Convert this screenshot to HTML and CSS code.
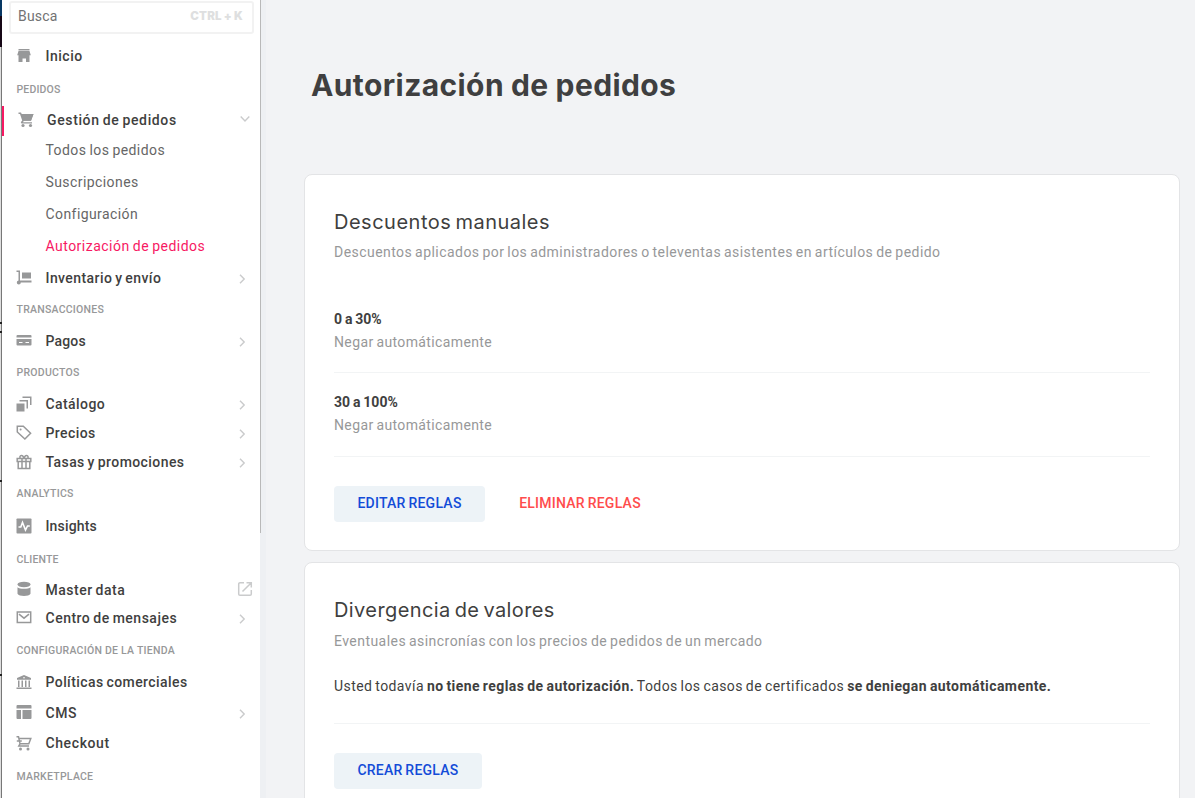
FILE: index.html
```html
<!DOCTYPE html>
<html lang="es">
<head>
<meta charset="utf-8">
<title>Autorización de pedidos</title>
<link rel="stylesheet" href="styles.css">
</head>
<body>
<div class="app">
  <div class="edge"><i class="edge-blue"></i><i class="edge-dark"></i><i class="edge-mark mark-a"></i><i class="edge-mark mark-b"></i><i class="edge-mark mark-c"></i><i class="edge-mark mark-d"></i></div>
  <nav class="sidebar">
    <div class="search"><span>Busca</span><kbd>CTRL + K</kbd></div>
    <a class="item h32"><svg viewBox="0 0 16 16"><path d="M2.500 1h11v1.500h-11zM2.500 3h11l1.300 4.200H1.200zM2.500 7h11v7H10v-3.500H6.500V14h-4z"/></svg><span>Inicio</span></a>
    <h4 class="h34">PEDIDOS</h4>
    <a class="item h28 open"><svg viewBox="0 0 16 16"><path d="M.5.500H3l.7 1.500H15.500L13 8.800H5.800L5 10.200h9v1.300H3.500l-.7-1.200L4.200 8.500 2 2H.5z"/><path d="M3.700 2h11.800L13 8.800H5z"/><circle cx="5" cy="13.500" r="1.600"/><circle cx="12.500" cy="13.500" r="1.600"/></svg><span>Gestión de pedidos</span><svg class="arrow down" viewBox="0 0 10 10"><path d="M.7 2.500 5 7l4.300-4.500"/></svg></a>
    <a class="sub"><span>Todos los pedidos</span></a>
    <a class="sub"><span>Suscripciones</span></a>
    <a class="sub"><span>Configuración</span></a>
    <a class="sub active"><span>Autorización de pedidos</span></a>
    <a class="item h32 medium"><svg viewBox="0 0 16 16"><path d="M.5.500H4V10.500h11.500v2H4.800a2 2 0 1 1-2.300-2V2h-2zM6 2.500h9v6H6z"/></svg><span>Inventario y envío</span><svg class="arrow" viewBox="0 0 10 10"><path d="M3 .7 7.200 5 3 9.300"/></svg></a>
    <h4 class="h31 wide">TRANSACCIONES</h4>
    <a class="item h32 tight"><svg viewBox="0 0 16 16"><path d="M1.500 2h13a1 1 0 0 1 1 1v1.500H.5V3a1 1 0 0 1 1-1zM.5 6h15v5.500a1 1 0 0 1-1 1h-13a1 1 0 0 1-1-1zM3 9v1h3.500V9zm6.500 0v1H13V9z" fill-rule="evenodd"/></svg><span>Pagos</span><svg class="arrow" viewBox="0 0 10 10"><path d="M3 .7 7.200 5 3 9.300"/></svg></a>
    <h4 class="h30 tail wide">PRODUCTOS</h4>
    <a class="item h29 medium"><svg class="raised" viewBox="0 0 16 16"><path d="M.5 7.500h8v8h-8zM3.500 4h8.500v8.500h-1.500v-7h-7zM6.500.5h9V9H14V2H6.500z"/></svg><span>Catálogo</span><svg class="arrow" viewBox="0 0 10 10"><path d="M3 .7 7.200 5 3 9.300"/></svg></a>
    <a class="item h29 medium"><svg class="raised" viewBox="0 0 16 16"><path class="line" d="M1.300 1.300h6l7.300 7-5.700 5.700-7.600-7z"/><circle cx="4.600" cy="4.600" r="1"/></svg><span>Precios</span><svg class="arrow" viewBox="0 0 10 10"><path d="M3 .7 7.200 5 3 9.300"/></svg></a>
    <a class="item h29 medium"><svg class="raised" viewBox="0 0 16 16"><path class="line" d="M1.200 4.500h13.600v3H1.200zM2.200 7.500h11.600v7H2.200zM6 4.500v10M10 4.500v10M6 4.500H4.500A1.700 1.700 0 1 1 6.800 2L8 4l1.200-2a1.700 1.700 0 1 1 2.300 2.500H10"/></svg><span>Tasas y promociones</span><svg class="arrow" viewBox="0 0 10 10"><path d="M3 .7 7.200 5 3 9.300"/></svg></a>
    <h4 class="h33 wide">ANALYTICS</h4>
    <a class="item h33 tight"><svg viewBox="0 0 16 16"><rect x=".5" y=".5" width="15" height="15" rx=".8"/><path class="white" d="M2.500 9h2.300l1.700-4.500L9.500 12l2-4h2.300"/></svg><span>Insights</span></a>
    <h4 class="h33">CLIENTE</h4>
    <a class="item h285"><svg class="raised" viewBox="0 0 16 16"><ellipse cx="8" cy="3.500" rx="6.500" ry="2.700"/><path d="M1.500 6.200c2 2 11 2 13 0v6.500c-1.500 3-11.500 3-13 0z"/></svg><span>Master data</span><svg class="external" viewBox="0 0 16 16"><path d="M7 1.700H3A1.300 1.300 0 0 0 1.700 3v10A1.300 1.300 0 0 0 3 14.300h10a1.300 1.300 0 0 0 1.300-1.300V9M9.500 1.700h4.800v4.800M14.300 1.700 5.500 10.500"/></svg></a>
    <a class="item h28"><svg viewBox="0 0 16 16"><path class="line" d="M1.300 2h13.400v10.500H1.300zM3 4.200l5 4 5-4"/></svg><span>Centro de mensajes</span><svg class="arrow" viewBox="0 0 10 10"><path d="M3 .7 7.200 5 3 9.300"/></svg></a>
    <h4 class="h36 wide">CONFIGURACIÓN DE LA TIENDA</h4>
    <a class="item h28 medium"><svg viewBox="0 0 16 16"><path d="M8 1l7 3v1.800H1V4zM2 6.500h1.500V13H2zM5.500 6.500H7V13H5.500zM9 6.500h1.500V13H9zM12.500 6.500H14V13h-1.500zM.5 13.500h15V15H.5z"/><circle class="dot" cx="8" cy="3.700" r=".8"/></svg><span>Políticas comerciales</span></a>
    <a class="item h33"><svg class="raised" viewBox="0 0 16 16"><path d="M1.500 1h13a1 1 0 0 1 1 1v2.500H.5V2a1 1 0 0 1 1-1zM.5 6H5v9H1.500a1 1 0 0 1-1-1zM6.500 6h9v8a1 1 0 0 1-1 1h-8z"/></svg><span>CMS</span><svg class="arrow" viewBox="0 0 10 10"><path d="M3 .7 7.200 5 3 9.300"/></svg></a>
    <a class="item h28 loose"><svg viewBox="0 0 16 16"><path class="line" d="M.5 1.700h2L4 8.800 2.800 11H13M3 3.500h11.800l-2 5.300H4M.8 6h5"/><circle cx="4.500" cy="14" r="1.500"/><circle cx="12" cy="14" r="1.500"/></svg><span>Checkout</span></a>
    <h4 class="h38 wide">MARKETPLACE</h4>
    <div class="scrollbar"></div>
  </nav>
  <main>
    <h1>Autorización de pedidos</h1>
    <section class="card first">
      <h2>Descuentos manuales</h2>
      <p class="lead">Descuentos aplicados por los administradores o televentas asistentes en artículos de pedido</p>
      <div class="rule"><b>0 a 30%</b><p>Negar automáticamente</p></div>
      <div class="rule last"><b>30 a 100%</b><p>Negar automáticamente</p></div>
      <div class="actions"><button class="edit">EDITAR REGLAS</button><button class="danger">ELIMINAR REGLAS</button></div>
    </section>
    <section class="card second">
      <h2>Divergencia de valores</h2>
      <p class="lead">Eventuales asincronías con los precios de pedidos de un mercado</p>
      <p class="notice">Usted todavía <b>no tiene reglas de autorización.</b> Todos los casos de certificados <b>se deniegan automáticamente.</b></p>
      <div class="actions"><button class="create">CREAR REGLAS</button></div>
    </section>
  </main>
</div>
</body>
</html>
```
FILE: styles.css
```css
* { box-sizing: border-box; }
body { margin: 0; font-family: Roboto, sans-serif; background: #f2f3f5; color: #3f3f40; }
h1, h2, h4, p { margin: 0; }
.app { display: flex; height: 798px; overflow: hidden; }

.edge { position: relative; width: 2px; background: #dedede; border-right: 1px solid #777; }
.edge i { position: absolute; left: 0; width: 2px; }
.edge-blue { top: 0; height: 16px; background: #073763; }
.edge-dark { top: 16px; height: 31px; background: #160716; }
.edge-mark { height: 2px; background: #222; }
.mark-a { top: 322px; }
.mark-b { top: 331px; }
.mark-c { top: 480px; }
.mark-d { top: 674px; }

.sidebar { position: relative; flex: none; width: 264px; background: linear-gradient(90deg, #fff 258px, #eef0f3 258px); display: flex; flex-direction: column; }
.scrollbar { position: absolute; left: 258px; top: 0; width: 1px; height: 533px; background: #b9b9b9; }
.search { flex: none; display: flex; align-items: center; justify-content: space-between; width: 245px; height: 33px; margin: 1px 0 6px 7px; padding: 0 9px 3px 7px; border: 2px solid #f2f2f2; border-radius: 3px; font-size: 14px; letter-spacing: .2px; color: #727273; }
.search kbd { font: 900 11.500px Inter, sans-serif; letter-spacing: .2px; word-spacing: -.4px; color: #dedfe0; }

.item { position: relative; flex: none; display: flex; align-items: center; padding: 0 19px 0 14px; font-size: 14px; font-weight: 500; letter-spacing: .5px; word-spacing: -1px; white-space: nowrap; }
.item svg { width: 16px; height: 16px; margin-left: -.5px; margin-right: 14px; fill: #979899; }
.item .raised { margin-top: -1px; }
.item .line { fill: none; stroke: #979899; stroke-width: 1.500; }
.item .white { fill: none; stroke: #fff; stroke-width: 1.600; }
.item .dot { fill: #fff; }
.item .arrow { width: 10px; height: 10px; margin: 2px 0 0 auto; fill: none; stroke: #cacbcc; stroke-width: 1.400; }
.item .external { margin: -1px -6px 0 auto; fill: none; stroke: #cacbcc; stroke-width: 1.500; }
.open { padding: 0 16px 0 16px; letter-spacing: .63px; }
.item.open svg:first-of-type { margin-right: 13.500px; }
.open::before { content: ""; position: absolute; left: 0; top: 0; width: 2px; height: 30px; background: #f71963; }
.item .down { margin-top: -3px; }
.tight { letter-spacing: .15px; }
.medium { letter-spacing: .42px; }
.loose { letter-spacing: .6px; }
.sub { flex: none; height: 32px; padding-left: 43.500px; display: flex; align-items: center; font-size: 14px; letter-spacing: .42px; word-spacing: -.8px; color: #666; }
.active { color: #f71963; letter-spacing: .48px; }
.sidebar h4 { flex: none; display: flex; align-items: center; padding-left: 14.500px; font-size: 10.500px; font-weight: 500; letter-spacing: .15px; color: #979899; }
.sidebar .wide { letter-spacing: .25px; }
.sidebar .tail { margin-bottom: 2.500px; }
.h28 { height: 28px; }
.h285 { height: 28.500px; }
.h29 { height: 29px; }
.h30 { height: 30px; }
.h31 { height: 31px; }
.h32 { height: 32px; }
.h33 { height: 33px; }
.h34 { height: 34px; }
.h36 { height: 36px; }
.h38 { height: 38px; }

main { flex: 1; padding: 65px 15px 0 38px; }
h1 { height: 109px; padding-left: 7px; font: 700 30px/40px Inter, sans-serif; letter-spacing: .4px; word-spacing: -.5px; }
.card { width: 876px; padding: 28px 29px 0; background: #fff; border: 1px solid #e3e4e6; border-radius: 8px; }
.first { height: 377px; margin-bottom: 11px; }
.second { height: 300px; }
h2 { font: 400 20px/38px Inter, sans-serif; letter-spacing: .5px; word-spacing: -2px; }
.second h2 { letter-spacing: .4px; }
.lead, .rule p { font-size: 14px; line-height: 22px; letter-spacing: .45px; word-spacing: -1px; color: #979899; }
.rule p { letter-spacing: .38px; }
.lead { white-space: nowrap; }
.second .lead { padding-top: 1px; }
.rule { height: 83px; border-bottom: 1px solid #f2f4f5; padding-top: 17px; }
.lead + .rule { height: 91px; margin-top: 19px; padding-top: 25px; }
.rule b { display: block; font-size: 14px; line-height: 24px; word-spacing: -.6px; }
.rule.last { height: 84px; }
.actions { display: flex; padding-top: 29px; }
button { height: 36px; border: 0; border-radius: 4px; background: #edf3f7; color: #134cd8; font: 500 14px Roboto, sans-serif; letter-spacing: .25px; word-spacing: -1px; padding: 0 0 2px; }
.edit { width: 151px; }
.create { width: 148px; }
.danger { width: 190px; background: none; color: #ff4c4c; }
.notice { height: 72px; padding-top: 23px; border-bottom: 1px solid #f2f4f5; font-size: 14px; line-height: 22px; letter-spacing: .43px; word-spacing: -1px; white-space: nowrap; }
```
